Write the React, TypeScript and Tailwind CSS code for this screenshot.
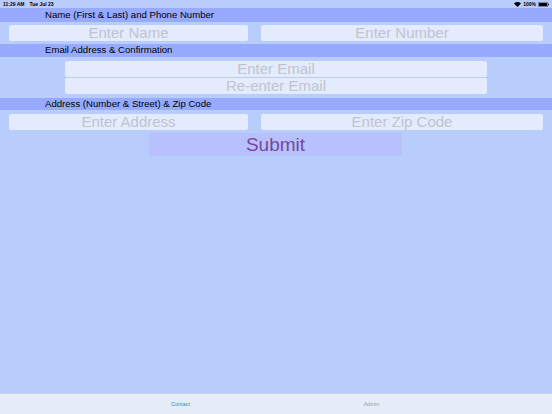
import React from "react"

const font = { fontFamily: '"Helvetica Neue", "Liberation Sans", Arial, sans-serif' }

function Field({ placeholder, className }: { placeholder: string; className: string }) {
  return (
    <input
      placeholder={placeholder}
      className={`h-[16px] rounded-[2px] bg-[#e4ebfd] text-center text-[15px] leading-[16px] text-gray-700 outline-none placeholder:text-[#bfc4cd] ${className}`}
    />
  )
}

function SectionHeader({ title, className = "" }: { title: string; className?: string }) {
  return (
    <div className={`flex items-center bg-[#97aafd] pl-[45px] text-[9.6px] text-black ${className}`}>
      {title}
    </div>
  )
}

export default function App() {
  return (
    <div style={font} className="flex h-[414px] w-[552px] flex-col overflow-hidden bg-[#b9cdfd]">
      {/* status bar */}
      <div className="flex h-[8px] items-center justify-between px-[3px] text-[5px] font-semibold leading-none text-black">
        <div className="flex gap-[5px]">
          <span>11:29 AM</span>
          <span>Tue Jul 23</span>
        </div>
        <div className="flex items-center gap-[2px]">
          <svg width="7" height="5" viewBox="0 0 14 10">
            <path d="M7 10 L0 3 A10 10 0 0 1 14 3 Z" fill="black" />
          </svg>
          <span>100%</span>
          <svg width="11" height="5" viewBox="0 0 22 10">
            <rect x="0.5" y="0.5" width="19" height="9" rx="2" fill="none" stroke="black" />
            <rect x="2" y="2" width="16" height="6" rx="1" fill="black" />
            <rect x="20" y="3.5" width="1.5" height="3" fill="black" />
          </svg>
        </div>
      </div>

      <SectionHeader title="Name (First & Last) and Phone Number" className="h-[14px]" />
      <div className="mt-[3px] flex gap-[13px] pl-[9px]">
        <Field placeholder="Enter Name" className="w-[239px]" />
        <Field placeholder="Enter Number" className="w-[282px]" />
      </div>

      <SectionHeader title="Email Address & Confirmation" className="mt-[3px] h-[13px]" />
      <div className="mt-[4px] flex flex-col gap-[1px] pl-[65px]">
        <Field placeholder="Enter Email" className="w-[422px]" />
        <Field placeholder="Re-enter Email" className="w-[422px]" />
      </div>

      <SectionHeader title="Address (Number & Street) & Zip Code" className="mt-[4px] h-[12px]" />
      <div className="mt-[4px] flex gap-[13px] pl-[9px]">
        <Field placeholder="Enter Address" className="w-[239px]" />
        <Field placeholder="Enter Zip Code" className="w-[282px]" />
      </div>

      <div className="mt-[3px] pl-[149px]">
        <button className="h-[23px] w-[253px] bg-[#b8c1fc] text-[19px] leading-[23px] text-[#76479e]">
          Submit
        </button>
      </div>

      <div className="flex-1" />

      {/* tab bar */}
      <div className="flex h-[21px] items-center justify-center gap-[131px] border-t border-[#c9d3e6] bg-[#e5edf8] pt-[1px] text-[5.5px]">
        <span className="w-[60px] text-center text-[#3b82f6]">Contact</span>
        <span className="w-[60px] text-center text-[#9aa0a8]">Admin</span>
      </div>
    </div>
  )
}
